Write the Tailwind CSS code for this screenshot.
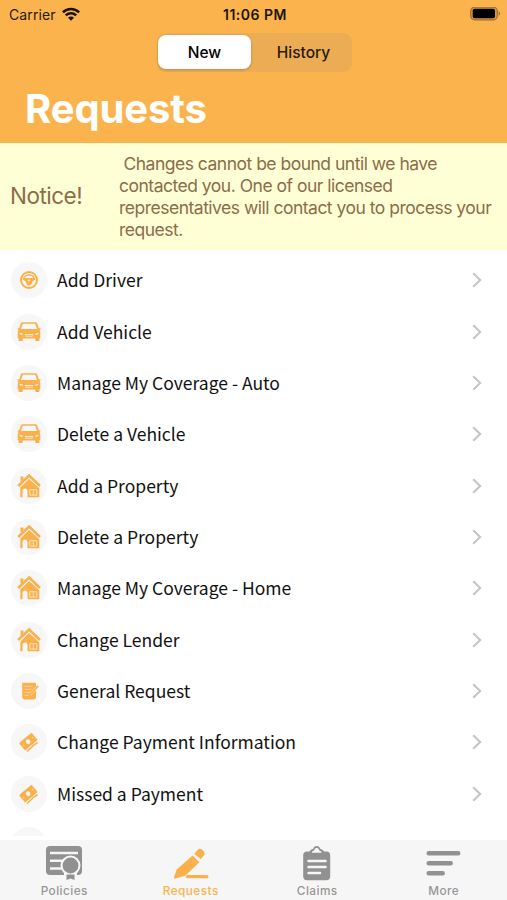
<!DOCTYPE html>
<html lang="en">
  <head>
    <meta charset="UTF-8" />
    <meta name="viewport" content="width=device-width, initial-scale=1.0" />
    <script src="https://cdn.jsdelivr.net/npm/@tailwindcss/browser@4"></script>
    <title>Requests</title>
  </head>
  <body class="bg-white">
    <!-- icons -->
    <svg class="hidden">
      <symbol id="driver" viewBox="0 0 36 36">
        <circle cx="18" cy="18" r="8" fill="none" stroke="#fbb14b" stroke-width="2" />
        <path fill="#fbb14b" fill-rule="evenodd" d="M12 16.500c1-3 3.200-4.300 6-4.300s5 1.300 6 4.300l.2 1.200-2.600 1.600-1.600 3.700-2 .7-2-.7-1.600-3.700-2.600-1.600zM13.500 16h9c-1-1.500-2.400-2.300-4.500-2.300s-3.500.8-4.500 2.300z" />
        <circle cx="18" cy="18.500" r="1" fill="#fde3bd" />
      </symbol>
      <symbol id="car" viewBox="0 0 36 36">
        <path fill="#fbb14b" fill-rule="evenodd" d="M11.700 8.300h12.600c1.100 0 1.700.5 2 1.500l1.600 4.700 1.500-.6v1.600l-1 .5c.7.7.9 1.500.9 2.500v5.500h-.8v2.100c0 .6-.4 1-1 1h-2.200c-.6 0-1-.4-1-1v-1.700h-12.600v1.700c0 .6-.4 1-1 1h-2.200c-.6 0-1-.4-1-1v-2.100h-.8v-5.500c0-1 .2-1.800.9-2.500l-1-.5v-1.600l1.500.6 1.600-4.700c.3-1 1-1.500 2-1.500zM11.800 9.800l-1.800 5.200h16l-1.800-5.200z" />
        <path fill="#f7f7f8" d="M8.400 18.700l3.700 1c-.2 1.500-3.400 1.500-3.700-1zM27.600 18.700l-3.700 1c.2 1.500 3.400 1.500 3.700-1zM13.800 20h8.500l-.8 2.600h-6.900z" />
        <path stroke="#fbb14b" stroke-width="1" d="M14.500 21.300h7.200" />
      </symbol>
      <symbol id="house" viewBox="0 0 36 36">
        <path fill="none" stroke="#fbb14b" stroke-width="2.700" d="M7.200 17.900l10.900-10.300 10.900 10.300" />
        <path fill="#fbb14b" d="M9.500 8.500h3v3l-3 2.800zM18.100 10.900l10.200 9.300v9h-11.800v-6.200c0-1.400-1-2.400-2.500-2.400s-2.500 1-2.500 2.400v6.200h-2.200v-9.700z" />
        <path fill="none" stroke="#fde2b9" stroke-width="1" d="M18.800 21.700h7v5.400h-7zM22.300 21.700v5.400" />
      </symbol>
      <symbol id="note" viewBox="0 0 36 36">
        <path fill="#fbb14b" d="M11.200 9.800h12.500c.8 0 1.300.5 1.300 1.300v13.200c-.3 1.500-1.300 2.200-2.500 2.200h-8.500c-1.900 0-2.800-1-2.800-2.800z" />
        <path fill="none" stroke="#fddcac" stroke-width=".8" d="M13.500 13.300h8M13.500 16.300h7M13.500 19.300h5.500M13.500 22.300h4.500" />
        <path fill="none" stroke="#fcdcae" stroke-width="2.600" d="M19.200 21.800l7-8" />
        <path fill="none" stroke="#fbb14b" stroke-width="1.500" d="M18.800 22.300l8.400-9.600" />
      </symbol>
      <symbol id="cash" viewBox="0 0 36 36">
        <g transform="rotate(-40 18 18)">
          <rect x="9.500" y="12.500" width="16.500" height="9.500" rx="1" fill="#fbb14b" />
          <ellipse cx="17.600" cy="17.200" rx="2.200" ry="2.500" fill="#f7f7f8" />
          <circle cx="11.800" cy="17.200" r=".7" fill="#fddcac" />
          <circle cx="23.600" cy="17.200" r=".7" fill="#fddcac" />
          <path fill="none" stroke="#fbb14b" stroke-width="1.600" d="M10.500 23.800h6.500l1.800-.6 2 .6h3.500" />
        </g>
      </symbol>
      <symbol id="blank" viewBox="0 0 36 36"></symbol>
    </svg>

    <main class="flex h-[900px] w-[507px] flex-col overflow-hidden font-['Inter',sans-serif]">
      <header class="flex h-[142.500px] shrink-0 flex-col bg-[#fbb44d]">
        <!-- status bar -->
        <div class="grid h-7 grid-cols-3 items-center pl-[9px] pr-[6px] text-[#241a0b]">
          <div class="flex items-center gap-[6px]">
            <span class="text-[14px] tracking-[0.100px]">Carrier</span>
            <svg class="h-[14px] w-[18px]" viewBox="0 0 18 14" fill="none" stroke="#1c1308" stroke-width="2.500">
              <path d="M.9 5.300c4.600-4.500 11.600-4.500 16.200 0M3.800 8.300c3-2.800 7.400-2.800 10.400 0" />
              <path fill="#1c1308" stroke="none" d="M9 13.700l-3-3c1.700-1.500 4.300-1.500 6 0z" />
            </svg>
          </div>
          <span class="whitespace-nowrap text-center text-[14px] font-semibold tracking-[0.500px] text-[#1c1308]">11:06 PM</span>
          <svg class="ml-auto h-[14px] w-[31px]" viewBox="0 0 31 14">
            <rect x=".7" y=".2" width="26.600" height="12.600" rx="3.800" fill="#d99b41" stroke="#96703a" stroke-width="1.200" />
            <rect x="2.700" y="1.700" width="22.300" height="9.500" rx="1.800" fill="#000" />
            <path fill="#96703a" d="M28.600 4.300c2 .8 2 3.600 0 4.400z" />
          </svg>
        </div>
        <div class="ml-[157px] mt-[5px] flex h-[39px] w-[195px] rounded-[9px] bg-[#ebac54] p-[2px] pl-[1px] text-[15.500px] font-medium">
          <button class="h-[34px] w-[93px] rounded-[8px] bg-white pt-px text-black shadow-[0_1px_3px_rgba(0,0,0,0.2)]">New</button>
          <button class="h-[34px] flex-1 pl-[6px] pt-px text-[#241a0b]">History</button>
        </div>
        <h1 class="ml-[25px] mt-[13px] text-[40px] font-bold leading-[48px] tracking-[-0.100px] text-white">Requests</h1>
      </header>

      <section class="flex h-[107px] shrink-0 items-center bg-[#ffffd6] text-[#8b6d49]">
        <span class="w-[119px] pl-[10px] text-[22.500px] tracking-[-0.500px]">Notice!</span>
        <p class="whitespace-pre pt-[2px] text-[17.500px] leading-[22px] tracking-[-0.500px]"> Changes cannot be bound until we have
contacted you. One of our licensed
representatives will contact you to process your
request.</p>
      </section>

      <ul class="h-[586.500px] shrink-0 overflow-hidden pt-[5.500px] font-['Noto_Sans_CJK_SC',sans-serif]" id="requests"></ul>

      <nav class="mt-[4px] grid h-[60px] shrink-0 grid-cols-4 bg-[#f6f6f6] pl-px text-[11.800px] font-medium tracking-[0.450px] text-[#969696]">
        <a class="flex flex-col items-center">
          <svg class="mt-[5px] h-[36px] w-[38px]" viewBox="0 0 38 36">
            <rect x="1" y="1" width="36" height="29" rx="4" fill="#919191" />
            <path stroke="#f6f6f6" stroke-width="2.600" d="M5 8h28M5 15.700h15M5 23.500h13" />
            <circle cx="25.500" cy="20.500" r="10" fill="#f6f6f6" />
            <path fill="#f6f6f6" d="M19 27h13v8h-13z" />
            <circle cx="25.500" cy="20.500" r="7.900" fill="#919191" />
            <path fill="#919191" d="M21.500 29.500h8v5.500l-4-1.500-4 1.500z" />
          </svg>
          <span class="mt-[2px] leading-[16px]">Policies</span>
        </a>
        <a class="flex flex-col items-center text-[#fbb44d]">
          <svg class="mt-[5px] h-[36px] w-[38px]" viewBox="0 0 38 36" fill="#fbb14b">
            <path d="M20.600 10.400l6.800 6.800-14.200 13.600-10 2.700c-.9.200-1.400-.4-1.200-1.300l2.700-7.700zM22.300 8.700l3.300-3.700c1.500-1.600 3.200-1.600 4.900 0l.9.900c1.700 1.700 1.700 3.400 0 5.100l-2.600 3.300z" />
            <rect x="14" y="30" width="22.500" height="3.300" rx="1.650" />
          </svg>
          <span class="mt-[2px] leading-[16px]">Requests</span>
        </a>
        <a class="flex flex-col items-center">
          <svg class="mt-[5px] h-[36px] w-[38px]" viewBox="0 0 38 36">
            <path fill="#919191" fill-rule="evenodd" d="M9 6.500h2.500c.7-1.700 2-2.300 3.500-2.500.6-2 2-3 3.700-3s3.100 1 3.700 3c1.500.2 2.800.8 3.500 2.500h2.500c2.400 0 3.800 1.400 3.800 3.700v21.300c0 2.400-1.400 3.700-3.800 3.700h-19.400c-2.400 0-3.800-1.400-3.800-3.700v-21.300c0-2.300 1.400-3.700 3.800-3.700zM16.400 4.600c0 .9-.8 1.600-2.400 1.900v1.300h9.400v-1.300c-1.600-.3-2.400-1-2.400-1.900-.5-2.200-4.100-2.200-4.600 0z" />
            <path stroke="#f6f6f6" stroke-width="2.500" stroke-linecap="round" d="M10.500 16h17M10.500 22h17M10.500 28h11.500" />
          </svg>
          <span class="mt-[2px] leading-[16px]">Claims</span>
        </a>
        <a class="flex flex-col items-center">
          <svg class="mt-[5px] h-[36px] w-[38px]" viewBox="0 0 38 36" stroke="#919191" stroke-width="4.500" stroke-linecap="round">
            <path d="M3.700 8.300h29.500M3.700 18.300h22M3.700 28.300h14" />
          </svg>
          <span class="mt-[2px] leading-[16px]">More</span>
        </a>
      </nav>
    </main>

    <script>
      const requests = [
        { icon: "driver", title: "Add Driver" },
        { icon: "car", title: "Add Vehicle" },
        { icon: "car", title: "Manage My Coverage - Auto" },
        { icon: "car", title: "Delete a Vehicle" },
        { icon: "house", title: "Add a Property" },
        { icon: "house", title: "Delete a Property" },
        { icon: "house", title: "Manage My Coverage - Home" },
        { icon: "house", title: "Change Lender" },
        { icon: "note", title: "General Request" },
        { icon: "cash", title: "Change Payment Information" },
        { icon: "cash", title: "Missed a Payment" },
        { icon: "blank", title: "" },
      ];

      //request rows
      document.getElementById("requests").innerHTML = requests
        .map((item) => {
          return `
          <li class="flex h-[51.350px] items-center pl-[11px] pr-[25px]">
            <svg class="-mt-px h-9 w-9 shrink-0 rounded-full bg-[#f7f7f8]"><use href="#${item.icon}" /></svg>
            <span class="-mt-px ml-[10px] flex-1 whitespace-nowrap text-[17.500px] leading-[28px] text-[#111]">${item.title}</span>
            <svg class="-mt-px h-[16px] w-[10px]" viewBox="0 0 10 16" fill="none" stroke="#c4c4c6" stroke-width="2">
              <path d="M1.200 1.300l7 6.700-7 6.700" />
            </svg>
          </li>`;
        })
        .join("");
    </script>
  </body>
</html>
